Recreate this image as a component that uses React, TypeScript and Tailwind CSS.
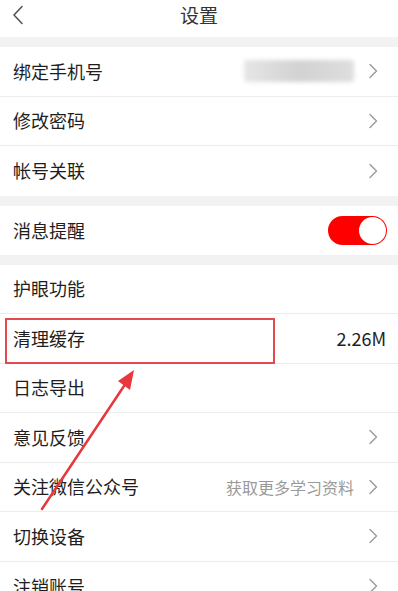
import React from "react";

const Chevron = () => (
  <svg width="10" height="16" viewBox="0 0 10 16" fill="none" className="shrink-0">
    <path d="M2 1.5 L8.5 8 L2 14.5" stroke="#9a9a9a" strokeWidth="1.4" strokeLinecap="round" strokeLinejoin="round" />
  </svg>
);

type RowProps = {
  label: string;
  right?: React.ReactNode;
  arrow?: boolean;
  last?: boolean;
};

const Row = ({ label, right, arrow, last }: RowProps) => (
  <div className={`h-[49.5px] flex items-center pl-[13px] pr-[20px] ${last ? "" : "border-b border-[#ececec]"}`}>
    <span className="text-[18px] text-[#1e1e1e] flex-1">{label}</span>
    {right}
    {arrow && <span className="ml-[14px]"><Chevron /></span>}
  </div>
);

const Gap = () => <div className="h-[10px] bg-[#f2f2f2]" />;

export default function App() {
  return (
    <div className="relative w-[398px] h-[591px] overflow-hidden bg-white font-['Noto_Sans_CJK_SC','Noto_Sans',sans-serif]">
      {/* header */}
      <div className="h-[37px] flex items-center relative">
        <svg width="12" height="20" viewBox="0 0 12 20" fill="none" className="absolute left-[12px] top-[5px]">
          <path d="M10 1.5 L2 10 L10 18.5" stroke="#555" strokeWidth="1.6" strokeLinecap="round" strokeLinejoin="round" />
        </svg>
        <div className="w-full text-center text-[19px] text-[#333] -mt-[6px]">设置</div>
      </div>
      <Gap />

      <Row
        label="绑定手机号"
        arrow
        right={
          <div className="w-[110px] h-[22px] rounded-[3px] bg-gradient-to-r from-[#e6e6e6] via-[#d2d2d2] to-[#dedede] blur-[2px]" />
        }
      />
      <Row label="修改密码" arrow />
      <Row label="帐号关联" arrow last />
      <Gap />

      <div className="h-[49px] flex items-center pl-[13px] pr-[11px]">
        <span className="text-[18px] text-[#1e1e1e] flex-1">消息提醒</span>
        <div className="w-[59px] h-[29px] rounded-full bg-[#ff0000] flex items-center justify-end pr-[1px]">
          <div className="w-[27px] h-[27px] rounded-full bg-white" />
        </div>
      </div>
      <Gap />

      <Row label="护眼功能" />
      <Row label="清理缓存" right={<span className="text-[18px] text-[#1e1e1e] -mr-[8px]">2.26M</span>} />
      <Row label="日志导出" />
      <Row label="意见反馈" arrow />
      <Row label="关注微信公众号" arrow right={<span className="text-[16px] text-[#999]">获取更多学习资料</span>} />
      <Row label="切换设备" arrow />
      <Row label="注销账号" arrow last />

      {/* annotation box */}
      <div className="absolute left-[5px] top-[318px] w-[270px] h-[46px] border-2 border-[#e34a4f]" />

      {/* annotation arrow */}
      <svg className="absolute left-0 top-0 pointer-events-none" width="398" height="591" viewBox="0 0 398 591">
        <line x1="42" y1="509" x2="124" y2="386" stroke="#e8383d" strokeWidth="2.5" strokeLinecap="round" />
        <polygon points="134,370 118,381 130,390" fill="#e8383d" />
      </svg>
    </div>
  );
}
